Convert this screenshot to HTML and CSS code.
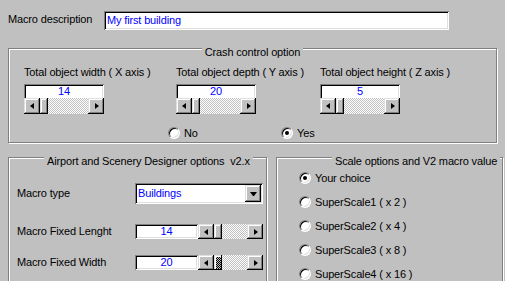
FILE: index.html
```html
<!DOCTYPE html>
<html lang="en">

<head>
    <title>Macro options</title>

    <link rel="stylesheet" href="styles.css">
</head>

<body>
    <div class="desc">
        <label>Macro description</label>
        <div class="edit desc-edit">My first building</div>
    </div>

    <div class="group crash">
        <div class="group-title">Crash control option</div>
        <div class="axes">
            <div class="axis">
                <div class="axis-label">Total object width ( X axis )</div>
                <div class="edit spin-edit">14</div>
                <div class="hscroll">
                    <div class="sb-btn"><span class="arrow-left"></span></div>
                    <div class="sb-thumb"></div>
                    <div class="sb-track"></div>
                    <div class="sb-btn"><span class="arrow-right"></span></div>
                </div>
            </div>
            <div class="axis">
                <div class="axis-label">Total object depth ( Y axis )</div>
                <div class="edit spin-edit">20</div>
                <div class="hscroll">
                    <div class="sb-btn"><span class="arrow-left"></span></div>
                    <div class="sb-thumb"></div>
                    <div class="sb-track"></div>
                    <div class="sb-btn"><span class="arrow-right"></span></div>
                </div>
            </div>
            <div class="axis">
                <div class="axis-label">Total object height ( Z axis )</div>
                <div class="edit spin-edit">5</div>
                <div class="hscroll">
                    <div class="sb-btn"><span class="arrow-left"></span></div>
                    <div class="sb-thumb"></div>
                    <div class="sb-track"></div>
                    <div class="sb-btn"><span class="arrow-right"></span></div>
                </div>
            </div>
        </div>
        <div class="crash-radios">
            <div class="radio no"><span class="dot"></span>No</div>
            <div class="radio"><span class="dot checked"></span>Yes</div>
        </div>
    </div>

    <div class="lower">
        <div class="group asd">
            <div class="group-title">Airport and Scenery Designer options &nbsp;v2.x</div>
            <div class="field-row combo-row">
                <label>Macro type</label>
                <div class="edit combo">
                    <span>Buildings</span>
                    <div class="sb-btn drop"><span class="arrow-down"></span></div>
                </div>
            </div>
            <div class="field-row len-row">
                <label>Macro Fixed Lenght</label>
                <div class="edit num-edit">14</div>
                <div class="hscroll small">
                    <div class="sb-btn"><span class="arrow-left"></span></div>
                    <div class="sb-thumb"></div>
                    <div class="sb-track"></div>
                    <div class="sb-btn"><span class="arrow-right"></span></div>
                </div>
            </div>
            <div class="field-row width-row">
                <label>Macro Fixed Width</label>
                <div class="edit num-edit">20</div>
                <div class="hscroll small">
                    <div class="sb-btn"><span class="arrow-left"></span></div>
                    <div class="sb-thumb focus"></div>
                    <div class="sb-track"></div>
                    <div class="sb-btn"><span class="arrow-right"></span></div>
                </div>
            </div>
        </div>

        <div class="group scale">
            <div class="group-title">Scale options and V2 macro value</div>
            <div class="scale-list">
                <div class="radio"><span class="dot checked"></span>Your choice</div>
                <div class="radio"><span class="dot"></span>SuperScale1 ( x 2 )</div>
                <div class="radio"><span class="dot"></span>SuperScale2 ( x 4 )</div>
                <div class="radio"><span class="dot"></span>SuperScale3 ( x 8 )</div>
                <div class="radio"><span class="dot"></span>SuperScale4 ( x 16 )</div>
            </div>
        </div>
    </div>
</body>

</html>
```

FILE: styles.css
```css
* {
    padding: 0;
    margin: 0;
    box-sizing: border-box;
}

body {
    width: 505px;
    height: 281px;
    overflow: hidden;
    background-color: #c0c0c0;
    color: #000;
    font-family: "Liberation Sans", Arial, sans-serif;
    font-size: 11px;
    line-height: 13px;
    letter-spacing: -0.15px;
}

/* sunken white field */
.edit {
    background-color: #fff;
    color: #0000ff;
    box-shadow: inset 1px 1px #808080, inset -1px -1px #fff, inset 2px 2px #000, inset -2px -2px #dfdfdf;
}

.desc {
    display: flex;
    align-items: center;
    margin: 11px 0 0 8px;
}

.desc label {
    width: 96px;
    margin-top: -3px;
}

.desc-edit {
    width: 345px;
    height: 19px;
    padding: 3px 0 0 3px;
}

/* etched group box */
.group {
    border: 1px solid #808080;
    box-shadow: 1px 1px #fff, inset 1px 1px #fff;
}

.group-title {
    width: max-content;
    margin: -3px auto 0;
    padding: 0 3px;
    background-color: #c0c0c0;
}

.crash {
    width: 489px;
    height: 95px;
    margin: 18px 0 0 8px;
}

.axes {
    display: grid;
    grid-template-columns: 152px 144px 80px;
    margin-top: 7px;
    padding-left: 15px;
}

.axis-label {
    margin-bottom: 5px;
    white-space: nowrap;
}

.spin-edit {
    width: 80px;
    height: 14px;
    padding-top: 1px;
    text-align: center;
    box-shadow: inset 1px 1px #808080, inset -1px 0 #fff, inset 2px 2px #000, inset -2px 0 #dfdfdf;
}

/* scroll bars */
.hscroll {
    display: flex;
    width: 80px;
    height: 16px;
}

.sb-btn,
.sb-thumb {
    flex: none;
    background-color: #c0c0c0;
    box-shadow: inset -1px -1px #000, inset 1px 1px #dfdfdf, inset -2px -2px #808080, inset 2px 2px #fff;
}

.sb-btn {
    width: 16px;
    display: flex;
    align-items: center;
    justify-content: center;
}

.sb-thumb {
    width: 8px;
}

.sb-thumb.focus {
    background: repeating-conic-gradient(#000 0 25%, #c0c0c0 0 50%) 0 0 / 2px 2px;
    box-shadow: inset -1px -1px #000, inset 1px 1px #dfdfdf, inset 2px 2px #fff;
}

.sb-track {
    flex: 1;
    background: repeating-conic-gradient(#fff 0 25%, #c0c0c0 0 50%) 0 0 / 2px 2px;
}

.arrow-left,
.arrow-right {
    width: 0;
    height: 1px;
    border-top: 3px solid transparent;
    border-bottom: 3px solid transparent;
}

.arrow-left {
    border-right: 4px solid #000;
    margin-left: -1px;
}

.arrow-right {
    border-left: 4px solid #000;
    margin-left: 1px;
}

.arrow-down {
    width: 1px;
    height: 0;
    border-left: 3px solid transparent;
    border-right: 3px solid transparent;
    border-top: 4px solid #000;
    box-sizing: content-box;
}

/* radio buttons */
.radio {
    display: flex;
    align-items: center;
    gap: 4px;
    height: 12px;
    white-space: nowrap;
}

.dot {
    flex: none;
    display: flex;
    align-items: center;
    justify-content: center;
    width: 12px;
    height: 12px;
    border-radius: 50%;
    background-color: #fff;
    border: 1px solid;
    border-color: #808080 #fff #fff #808080;
    box-shadow: inset 1px 1px #000, inset -1px -1px #dfdfdf;
}

.dot.checked::after {
    content: "";
    width: 4px;
    height: 4px;
    border-radius: 50%;
    background-color: #000;
}

.crash-radios {
    display: flex;
    margin-top: 13px;
    padding-left: 159px;
}

.radio.no {
    width: 113px;
}

/* lower group boxes */
.lower {
    display: flex;
    gap: 9px;
    margin: 14px 0 0 8px;
}

.asd {
    width: 259px;
    height: 125px;
}

.scale {
    width: 227px;
    height: 125px;
}

.asd .group-title {
    margin-left: 35px;
}

.scale .group-title {
    margin-left: 55px;
}

.field-row {
    display: flex;
    align-items: center;
    padding-left: 8px;
}

.field-row label {
    width: 118px;
}

.combo-row {
    margin-top: 15px;
}

.len-row {
    margin-top: 20px;
}

.width-row {
    margin-top: 16px;
}

.combo {
    display: flex;
    align-items: center;
    justify-content: space-between;
    width: 128px;
    height: 21px;
    padding: 2px 2px 2px 3px;
}

.drop {
    width: 16px;
    height: 17px;
}

.num-edit {
    width: 63px;
    height: 15px;
    padding-top: 1px;
    text-align: center;
}

.hscroll.small {
    width: 65px;
    height: 15px;
}

.scale-list {
    display: flex;
    flex-direction: column;
    gap: 12px;
    margin-top: 4px;
    padding-left: 22px;
}
```
